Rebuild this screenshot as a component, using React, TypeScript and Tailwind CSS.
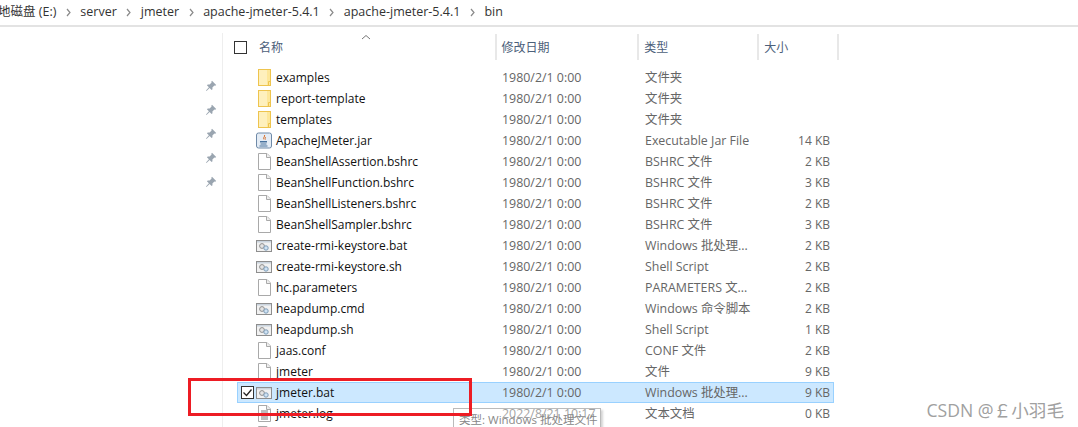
const rows: [string, string, string, string, string][] = [
  ["folder", "examples", "1980/2/1 0:00", "文件夹", ""],
  ["folder", "report-template", "1980/2/1 0:00", "文件夹", ""],
  ["folder", "templates", "1980/2/1 0:00", "文件夹", ""],
  ["jar", "ApacheJMeter.jar", "1980/2/1 0:00", "Executable Jar File", "14 KB"],
  ["file", "BeanShellAssertion.bshrc", "1980/2/1 0:00", "BSHRC 文件", "2 KB"],
  ["file", "BeanShellFunction.bshrc", "1980/2/1 0:00", "BSHRC 文件", "3 KB"],
  ["file", "BeanShellListeners.bshrc", "1980/2/1 0:00", "BSHRC 文件", "2 KB"],
  ["file", "BeanShellSampler.bshrc", "1980/2/1 0:00", "BSHRC 文件", "3 KB"],
  ["bat", "create-rmi-keystore.bat", "1980/2/1 0:00", "Windows 批处理...", "2 KB"],
  ["bat", "create-rmi-keystore.sh", "1980/2/1 0:00", "Shell Script", "2 KB"],
  ["file", "hc.parameters", "1980/2/1 0:00", "PARAMETERS 文...", "2 KB"],
  ["bat", "heapdump.cmd", "1980/2/1 0:00", "Windows 命令脚本", "2 KB"],
  ["bat", "heapdump.sh", "1980/2/1 0:00", "Shell Script", "1 KB"],
  ["file", "jaas.conf", "1980/2/1 0:00", "CONF 文件", "2 KB"],
  ["file", "jmeter", "1980/2/1 0:00", "文件", "9 KB"],
  ["bat", "jmeter.bat", "1980/2/1 0:00", "Windows 批处理...", "9 KB"],
  ["log", "jmeter.log", "2022/8/21 10:17", "文本文档", "0 KB"],
  ["file", "", "", "", ""],
];

const crumbs = ["server", "jmeter", "apache-jmeter-5.4.1", "apache-jmeter-5.4.1", "bin"];

function Chevron() {
  return (
    <svg width="5" height="9" viewBox="0 0 5 9" className="shrink-0">
      <path d="M1 1l3 3.5L1 8" fill="none" stroke="#8a8a8a" strokeWidth="1.2" />
    </svg>
  );
}

function Pin() {
  return (
    <svg width="12" height="12" viewBox="0 0 12 12">
      <path d="M7 0.8l4.2 4.2-1 .7-.8-.3-2 2 .1 1.8-.9.9-2-2L1.5 11 1 10.5l2.9-3.2-2-2 .9-.9 1.8.1 2-2-.3-.8z" fill="#9aa5b0" />
    </svg>
  );
}

function FileIcon({ kind }: { kind: string }) {
  if (kind === "folder") {
    return (
      <svg width="13" height="17" viewBox="0 0 13 17">
        <rect x=".5" y=".5" width="12" height="16" fill="#fde79a" stroke="#eec44e" />
        <rect x="1" y="1" width="8" height="15" fill="#fef0bd" />
        <path d="M10.500 16.500v-4h2" fill="none" stroke="#eec44e" />
      </svg>
    );
  }
  if (kind === "jar") {
    return (
      <svg width="16" height="17" viewBox="0 0 16 17">
        <rect x=".5" y="1" width="15" height="15" rx="2" fill="#e4ecf5" stroke="#6f8aa8" />
        <path d="M8.500 3c1 1.500-2 2.500-.5 4.500M10 5c-1 .8-1 1.500-.5 2.500" fill="none" stroke="#d9702a" strokeWidth="1" />
        <path d="M4 9h7v1.500H4zM4.500 11.500h6v1h-6zM3.500 13.500h8v1h-8z" fill="#48729e" />
      </svg>
    );
  }
  if (kind === "bat") {
    return (
      <svg width="16" height="12" viewBox="0 0 16 12">
        <rect x=".5" y=".5" width="15" height="11" fill="#f1f1f1" stroke="#8e8e8e" />
        <rect x="1" y="1" width="14" height="1.500" fill="#c9d3dd" />
        <circle cx="6" cy="6" r="2.400" fill="#e4e4e4" stroke="#8f8f8f" />
        <circle cx="10" cy="8" r="2.200" fill="#cfe2f3" stroke="#7f9db8" />
      </svg>
    );
  }
  return (
    <svg width="13" height="17" viewBox="0 0 13 17">
      <path d="M.5.5h8.500l3.500 3.500v12.500H.5z" fill="#ffffff" stroke="#a9a9a9" />
      <path d="M8.500.5v4h4" fill="#eeeeee" stroke="#a9a9a9" />
      {kind === "log" && <path d="M3 6h7M3 8h7M3 10h7M3 12h7M3 14h7" stroke="#7d7d7d" strokeWidth="1" />}
    </svg>
  );
}

export default function App() {
  return (
    <div className="relative h-[427px] w-[1078px] overflow-hidden bg-white font-['Open_Sans','Noto_Sans_CJK_SC',sans-serif] text-[12px]">
      {/* address bar */}
      <div className="flex h-[27px] items-center gap-[9.5px] overflow-hidden border-b-2 border-[#e3e3e3] text-[12.5px] text-[#333]">
        <span className="-ml-[2px]">地磁盘 (E:)</span>
        {crumbs.map((c, i) => (
          <div key={i} className="flex items-center gap-[9.5px]">
            <Chevron />
            <span>{c}</span>
          </div>
        ))}
      </div>

      <div className="flex">
        {/* quick access pins */}
        <div className="flex h-[400px] w-[222px] flex-col items-end gap-[12px] pr-[5px] pt-[53px]">
          <Pin />
          <Pin />
          <Pin />
          <Pin />
          <Pin />
        </div>

        <div className="mt-[6px] w-[617px] border-l border-[#eeeeee] pl-[14px]">
          {/* header */}
          <div className="relative flex h-[28px] items-center text-[#4c607a]">
            <div className="flex w-[258px] items-center pt-[1px]">
              <span className="ml-[-3px] h-[13px] w-[13px] border border-[#333]" />
              <span className="ml-[12px]">名称</span>
            </div>
            <div className="flex h-[26px] w-[143px] items-center border-l-2 border-[#e8e8e8] pl-[5px] pt-[2px]">修改日期</div>
            <div className="flex h-[26px] w-[120px] items-center border-l-2 border-[#e8e8e8] pl-[5px] pt-[2px]">类型</div>
            <div className="flex h-[26px] w-[82px] items-center border-x-2 border-[#e8e8e8] pl-[5px] pt-[2px]">大小</div>
            <svg width="10" height="6" viewBox="0 0 10 6" className="absolute left-[124px] top-[1px]">
              <path d="M1 5l4-3.500L9 5" fill="none" stroke="#777" />
            </svg>
          </div>

          {/* file rows */}
          <div className="mt-[6px]">
            {rows.map((r, i) => {
              const selected = r[1] === "jmeter.bat";
              return (
                <div
                  key={i}
                  className={
                    selected
                      ? "flex h-[21px] w-[597px] items-center border border-[#99d1ff] bg-[#cce8ff]"
                      : "flex h-[21px] w-[597px] items-center border border-transparent"
                  }
                >
                  <div className="flex w-[18px] justify-center">
                    {selected && (
                      <span className="flex h-[13px] w-[13px] items-center justify-center border border-[#333] bg-white">
                        <svg width="11" height="11" viewBox="0 0 11 11">
                          <path d="M1.500 5.500l3 3 5-6" fill="none" stroke="#222" strokeWidth="1.300" />
                        </svg>
                      </span>
                    )}
                  </div>
                  <div className="mr-[4px] flex w-[16px] shrink-0 justify-center">
                    <FileIcon kind={r[0]} />
                  </div>
                  <span className="w-[226px] text-[#111]">{r[1]}</span>
                  <span className="w-[143px] pt-[2px] text-[12.4px] text-[#666]">{r[2]}</span>
                  <span className="w-[110px] pt-[2px] text-[12.4px] text-[#666]">{r[3]}</span>
                  <span className="w-[75px] text-right text-[#666]">{r[4]}</span>
                </div>
              );
            })}
          </div>
        </div>
      </div>

      {/* tooltip over the log row */}
      <div className="absolute left-[453px] top-[408px] flex h-[20px] w-[148px] items-center border border-[#bbbbbb] bg-white/40 pl-[5px] pt-[4px] text-[11.5px] text-[#888] shadow-[2px_2px_2px_#d5d5d5]">
        类型: Windows 批处理文件
      </div>

      {/* red annotation box */}
      <div className="absolute left-[188px] top-[378px] h-[38px] w-[284px] border-[3px] border-[#ed1c24]" />

      {/* watermark */}
      <div className="absolute right-[14px] top-[400px] text-[17.6px] leading-[20px] text-[#a0a0a0]">CSDN @￡小羽毛</div>
    </div>
  );
}
